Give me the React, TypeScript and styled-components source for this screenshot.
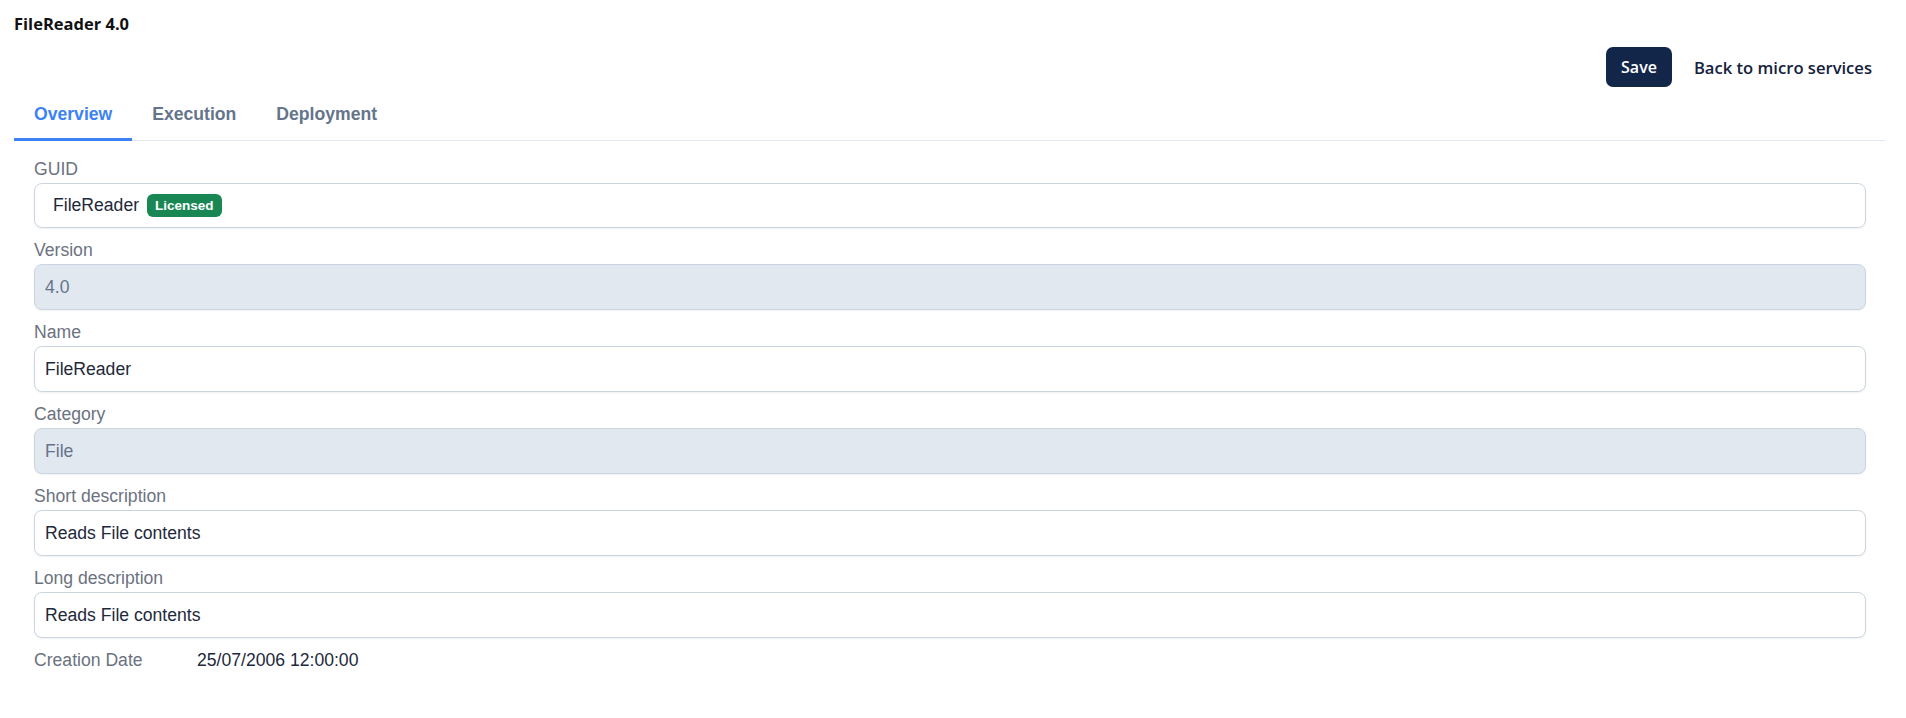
import React from 'react';
import styled, { createGlobalStyle } from 'styled-components';

const GlobalStyle = createGlobalStyle`
  html, body {
    margin: 0;
    padding: 0;
    background: #ffffff;
  }

  body {
    font-family: 'Liberation Sans', Arial, sans-serif;
  }

  * {
    box-sizing: border-box;
  }
`;

const Page = styled.div`
  padding: 12px 20px 40px 14px;
`;

const Title = styled.h1`
  margin: 0;
  font-family: 'Open Sans', 'Noto Sans', sans-serif;
  font-size: 16.5px;
  font-weight: 700;
  line-height: 24px;
  color: #111111;
`;

const Actions = styled.div`
  display: flex;
  justify-content: flex-end;
  align-items: center;
  gap: 8px;
  margin-top: 11px;
`;

const SaveButton = styled.button`
  height: 40px;
  padding: 0 15px;
  border: none;
  border-radius: 7px;
  background: #12264a;
  color: #ffffff;
  font-family: 'Open Sans', 'Noto Sans', sans-serif;
  font-size: 16px;
  font-weight: 600;
  cursor: pointer;
`;

const BackLink = styled.a`
  padding: 0 14px;
  font-family: 'Open Sans', 'Noto Sans', sans-serif;
  font-size: 16.6px;
  font-weight: 600;
  color: #14213d;
  text-decoration: none;
  cursor: pointer;
`;

const TabList = styled.div`
  display: flex;
  margin-top: 4px;
  border-bottom: 1px solid #e2e8f0;
`;

const Tab = styled.button<{ $active?: boolean }>`
  padding: 11px 20px 12px;
  margin-bottom: -1px;
  border: none;
  border-bottom: 3px solid ${({ $active }) => ($active ? '#3b82f6' : 'transparent')};
  background: transparent;
  font-family: 'Liberation Sans', Arial, sans-serif;
  font-size: 17.6px;
  font-weight: 700;
  line-height: 24px;
  color: ${({ $active }) => ($active ? '#3b82f6' : '#64748b')};
  cursor: pointer;
`;

const Form = styled.div`
  display: flex;
  flex-direction: column;
  gap: 8px;
  padding: 14px 20px 0;
`;

const Field = styled.div`
  display: flex;
  flex-direction: column;
`;

const Label = styled.label`
  font-size: 17.6px;
  line-height: 28px;
  color: #6b7280;
`;

const Input = styled.input<{ disabled?: boolean }>`
  width: 100%;
  height: 46px;
  padding: 0 10px;
  border: 1px solid #cbd5e1;
  border-radius: 8px;
  background: ${({ disabled }) => (disabled ? '#e2e8f0' : '#ffffff')};
  box-shadow: 0 1px 2px rgba(15, 23, 42, 0.06);
  font-family: 'Liberation Sans', Arial, sans-serif;
  font-size: 17.6px;
  color: ${({ disabled }) => (disabled ? '#64748b' : '#1e293b')};
  outline: none;
`;

const GuidBox = styled.div`
  display: flex;
  align-items: center;
  gap: 8px;
  height: 45px;
  padding: 0 18px;
  border: 1px solid #cbd5e1;
  border-radius: 8px;
  box-shadow: 0 1px 2px rgba(15, 23, 42, 0.06);
  font-size: 17.6px;
  color: #1e293b;
`;

const Badge = styled.span`
  display: inline-flex;
  align-items: center;
  height: 23px;
  padding: 0 8px;
  border-radius: 6px;
  background: #198754;
  color: #ffffff;
  font-size: 13.5px;
  font-weight: 700;
`;

const InfoRow = styled.div`
  display: flex;
  font-size: 17.6px;
  line-height: 28px;
`;

const InfoLabel = styled.span`
  width: 163px;
  color: #6b7280;
`;

const InfoValue = styled.span`
  color: #1e293b;
`;

const tabs = ['Overview', 'Execution', 'Deployment'];

const fields = [
  { label: 'Version', value: '4.0', disabled: true },
  { label: 'Name', value: 'FileReader' },
  { label: 'Category', value: 'File', disabled: true },
  { label: 'Short description', value: 'Reads File contents' },
  { label: 'Long description', value: 'Reads File contents' },
];

export default function App() {
  return (
    <Page>
      <GlobalStyle />
      <Title>FileReader 4.0</Title>
      <Actions>
        <SaveButton>Save</SaveButton>
        <BackLink>Back to micro services</BackLink>
      </Actions>
      <TabList>
        {tabs.map((t, i) => (
          <Tab key={t} $active={i === 0}>
            {t}
          </Tab>
        ))}
      </TabList>
      <Form>
        <Field>
          <Label>GUID</Label>
          <GuidBox>
            FileReader
            <Badge>Licensed</Badge>
          </GuidBox>
        </Field>
        {fields.map((f) => (
          <Field key={f.label}>
            <Label>{f.label}</Label>
            <Input defaultValue={f.value} disabled={f.disabled} />
          </Field>
        ))}
        <InfoRow>
          <InfoLabel>Creation Date</InfoLabel>
          <InfoValue>25/07/2006 12:00:00</InfoValue>
        </InfoRow>
      </Form>
    </Page>
  );
}
